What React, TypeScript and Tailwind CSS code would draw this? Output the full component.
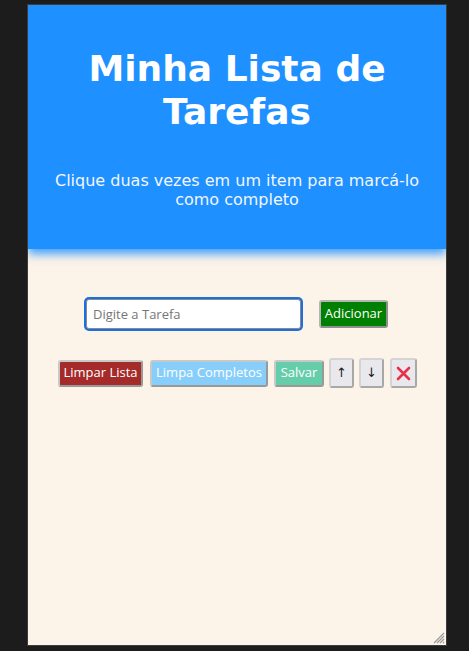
import React from "react";

const btnFont = { fontFamily: '"Open Sans", "Noto Sans", sans-serif' } as React.CSSProperties;

export default function App() {
  return (
    <div className="w-[469px] h-[651px] bg-[#1b1c1b] pl-[27px] pt-[4px] overflow-hidden">
      <div className="relative w-[420px] h-[642px] border border-[#3c3c3c] bg-[#fcf3e9] flex flex-col overflow-hidden">
        <header
          className="h-[244px] shrink-0 bg-[#1e90ff] text-white text-center px-[20px] pt-[42px] shadow-[0_5px_9px_rgba(30,144,255,0.85)] relative z-10"
          style={{ fontFamily: '"DejaVu Sans", sans-serif' }}
        >
          <h1 className="text-[36px] leading-[43px] font-bold">Minha Lista de Tarefas</h1>
          <p className="mt-[38px] text-[16px] leading-[19px] text-[#f2f6ff]">
            Clique duas vezes em um item para marcá-lo como completo
          </p>
        </header>

        <div className="flex justify-center items-center mt-[50px]" style={btnFont}>
          <input
            placeholder="Digite a Tarefa"
            className="w-[215px] h-[30px] bg-white border border-[#8a8a8a] rounded-[3px] shadow-[0_0_0_2px_#1a6fe3] px-[6px] text-[13px] text-[#333] placeholder:text-[#767676] outline-none"
          />
          <button className="ml-[18px] w-[69px] h-[28px] bg-[#008000] text-white text-[13px] rounded-[3px] border-2 border-[#b5b5b5] border-b-[#8e8e8e] border-r-[#8e8e8e] flex items-center justify-center">
            Adicionar
          </button>
        </div>

        <div className="flex justify-center items-center mt-[29px] ml-[1px]" style={btnFont}>
          <button className="w-[85px] h-[27px] bg-[#a52a2a] text-white text-[13px] rounded-[3px] border-2 border-[#c8c8c8] border-b-[#999] border-r-[#999] flex items-center justify-center">
            Limpar Lista
          </button>
          <button className="ml-[7px] w-[118px] h-[27px] bg-[#87cefa] text-white text-[13px] rounded-[3px] border-2 border-[#c8c8c8] border-b-[#999] border-r-[#999] flex items-center justify-center">
            Limpa Completos
          </button>
          <button className="ml-[6px] w-[50px] h-[27px] bg-[#66cdaa] text-white text-[13px] rounded-[3px] border-2 border-[#c8c8c8] border-b-[#999] border-r-[#999] flex items-center justify-center">
            Salvar
          </button>
          <button
            className="ml-[5px] w-[25px] h-[30px] bg-[#e9e9ed] text-[#1a1a1a] text-[13px] rounded-[3px] border-2 border-[#d4d4d4] border-b-[#a8a8a8] border-r-[#a8a8a8] flex items-center justify-center"
            style={{ fontFamily: '"DejaVu Sans", sans-serif' }}
          >
            ↑
          </button>
          <button
            className="ml-[5px] w-[25px] h-[30px] bg-[#e9e9ed] text-[#1a1a1a] text-[13px] rounded-[3px] border-2 border-[#d4d4d4] border-b-[#a8a8a8] border-r-[#a8a8a8] flex items-center justify-center"
            style={{ fontFamily: '"DejaVu Sans", sans-serif' }}
          >
            ↓
          </button>
          <button className="ml-[6px] w-[27px] h-[30px] bg-[#e9e9ed] rounded-[3px] border-2 border-[#d4d4d4] border-b-[#a8a8a8] border-r-[#a8a8a8] flex items-center justify-center">
            <svg width="15" height="15" viewBox="0 0 15 15">
              <path d="M2 2 L13 13 M13 2 L2 13" stroke="#e5334b" strokeWidth="2.6" strokeLinecap="round" />
            </svg>
          </button>
        </div>

        <svg className="absolute right-[1px] bottom-[1px]" width="13" height="13" viewBox="0 0 13 13">
          <path d="M12 2 L2 12 M12 5 L5 12 M12 8 L8 12 M12 11 L11 12" stroke="#9a9a9a" strokeWidth="1.2" />
        </svg>
      </div>
    </div>
  );
}
